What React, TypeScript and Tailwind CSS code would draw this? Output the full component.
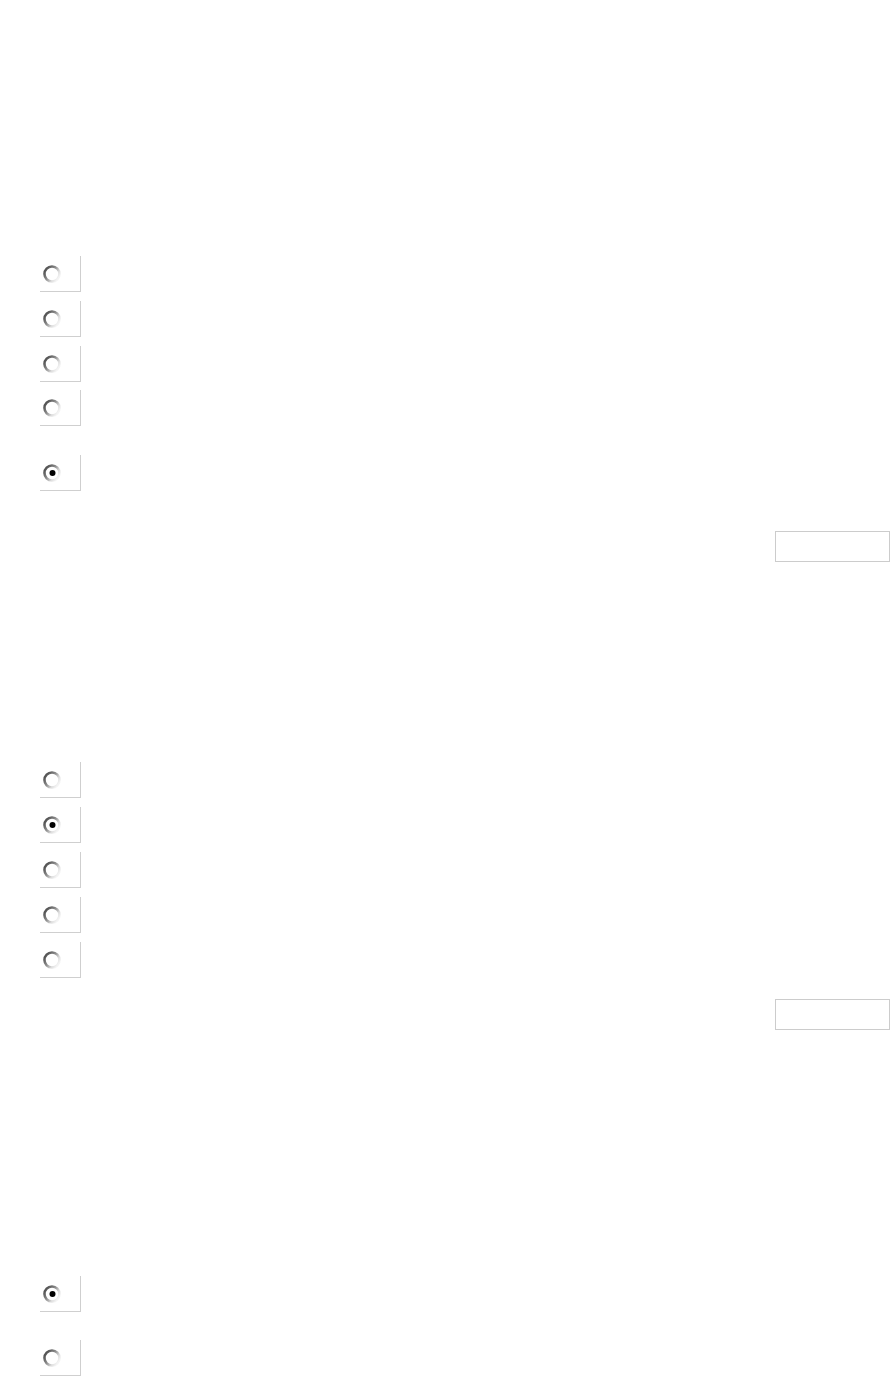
import React from "react";

type Opt = { checked?: boolean; gap: string };

function Radio({ checked }: { checked?: boolean }) {
  return (
    <svg width="20" height="20" viewBox="0 0 20 20" className="block">
      <defs>
        <linearGradient id="ring" x1="0.1" y1="0.2" x2="0.9" y2="0.8">
          <stop offset="0" stopColor="#555" />
          <stop offset="0.4" stopColor="#8a8a8a" />
          <stop offset="0.75" stopColor="#dcdcdc" />
          <stop offset="1" stopColor="#f4f4f4" />
        </linearGradient>
      </defs>
      <circle cx="10" cy="10" r="7.5" fill="#fff" stroke="url(#ring)" strokeWidth="2.6" />
      {checked && <circle cx="10.5" cy="10" r="3" fill="#000" />}
    </svg>
  );
}

function OptionRow({ checked, gap }: Opt) {
  return (
    <div className={`${gap} flex h-[36px] items-center`}>
      <label className="flex h-[36px] w-[41px] items-center border-r border-b border-[#cfcfcf] pl-[2px]">
        <Radio checked={checked} />
      </label>
    </div>
  );
}

function NextButton({ gap }: { gap: string }) {
  return (
    <div className={`${gap} flex justify-end pr-[3px]`}>
      <button className="h-[31px] w-[115px] border border-[#cccccc] bg-white" />
    </div>
  );
}

const q1: Opt[] = [
  { gap: "mt-0" },
  { gap: "mt-[9px]" },
  { gap: "mt-[9px]" },
  { gap: "mt-[8px]" },
  { gap: "mt-[29px]", checked: true },
];

const q2: Opt[] = [
  { gap: "mt-0" },
  { gap: "mt-[9px]", checked: true },
  { gap: "mt-[9px]" },
  { gap: "mt-[9px]" },
  { gap: "mt-[9px]" },
];

const q3: Opt[] = [
  { gap: "mt-0", checked: true },
  { gap: "mt-[28px]" },
];

export default function App() {
  return (
    <div className="min-h-[1377px] overflow-hidden bg-white font-['Liberation_Sans',Arial,sans-serif]">
      <section className="pt-[256px]">
        <div className="pl-[40px]">
          {q1.map((o, i) => (
            <OptionRow key={i} {...o} />
          ))}
        </div>
        <NextButton gap="mt-[40px]" />
      </section>

      <section className="mt-[200px]">
        <div className="pl-[40px]">
          {q2.map((o, i) => (
            <OptionRow key={i} {...o} />
          ))}
        </div>
        <NextButton gap="mt-[21px]" />
      </section>

      <section className="mt-[246px]">
        <div className="pl-[40px]">
          {q3.map((o, i) => (
            <OptionRow key={i} {...o} />
          ))}
        </div>
      </section>
    </div>
  );
}
